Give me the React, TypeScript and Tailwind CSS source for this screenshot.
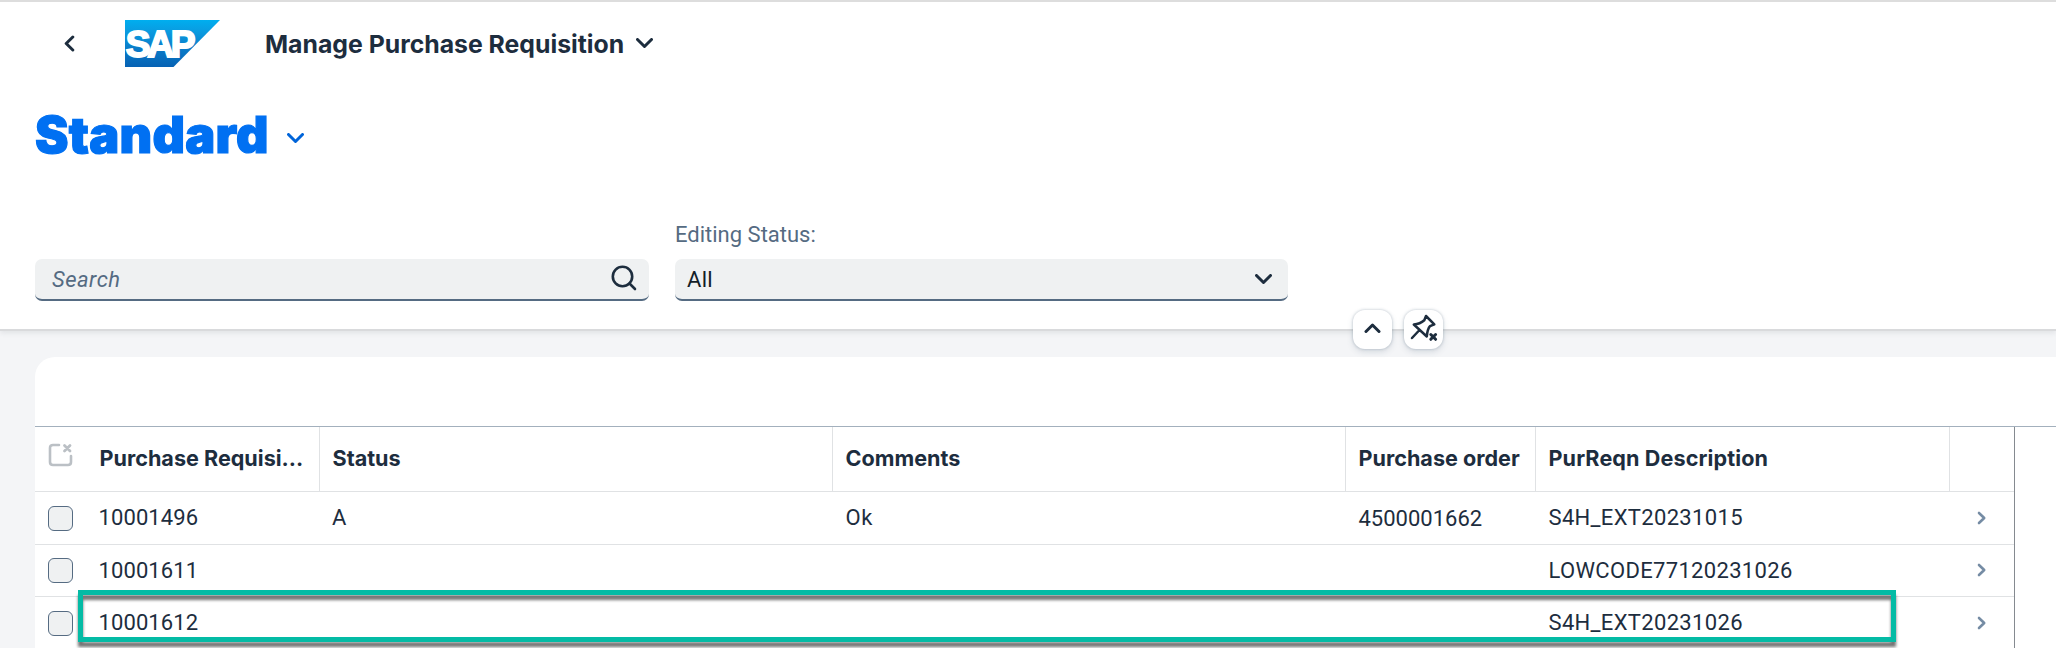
const requisitions = [
  { id: "10001496", status: "A", comments: "Ok", order: "4500001662", description: "S4H_EXT20231015" },
  { id: "10001611", status: "", comments: "", order: "", description: "LOWCODE77120231026" },
  { id: "10001612", status: "", comments: "", order: "", description: "S4H_EXT20231026" },
];

const columns = "grid grid-cols-[52px_233px_513px_513px_190px_414px_64px]";

function Chevron({ className, d = "M1.5 1.5 8.5 8.5 15.5 1.5" }: { className: string; d?: string }) {
  return (
    <svg className={className} width="17" height="10" viewBox="0 0 17 10" fill="none" stroke="currentColor" strokeWidth="3" strokeLinecap="round" strokeLinejoin="round">
      <path d={d} />
    </svg>
  );
}

function SapLogo() {
  return (
    <svg width="95" height="47" viewBox="0 0 95 47" className="ml-[50px] shrink-0">
      <defs>
        <linearGradient id="sap" x1="0" y1="0" x2="0" y2="1">
          <stop offset="0" stopColor="#00aeef" />
          <stop offset="0.25" stopColor="#0a9be0" />
          <stop offset="0.6" stopColor="#0a7cc9" />
          <stop offset="1" stopColor="#0662b4" />
        </linearGradient>
      </defs>
      <path d="M0 0H95L48.5 47H0Z" fill="url(#sap)" />
      <text x="0.8" y="36.8" fill="#fff" stroke="#fff" strokeWidth="2" fontSize="37" fontWeight="700" fontFamily="'Liberation Sans', sans-serif" letterSpacing="-3.2">
        SAP
      </text>
    </svg>
  );
}

function ShellBar() {
  return (
    <div className="flex h-[64px] items-center border-t-2 border-[#dddddd] text-[#1d2d3e]">
      <svg width="11" height="17" viewBox="0 0 11 17" fill="none" stroke="currentColor" strokeWidth="3" strokeLinecap="round" strokeLinejoin="round" className="mt-[21px] ml-[64px]">
        <path d="M8.8 2 2.2 8.5 8.8 15" />
      </svg>
      <div className="mt-[21px] flex">
        <SapLogo />
      </div>
      <h1 className="mt-[21px] ml-[45px] font-['Inter'] text-[24.8px] leading-[32px] font-bold whitespace-nowrap">Manage Purchase Requisition</h1>
      <Chevron className="mt-[20px] ml-[12px]" />
    </div>
  );
}

function Filters() {
  return (
    <div className="flex items-end pl-[35px]">
      <div className="flex h-[42px] w-[614px] items-center justify-between rounded-[7px] border-b-2 border-[#556b82] bg-[#eff1f2] pr-[12px] pl-[17px]">
        <span className="text-[22px] tracking-[0.5px] text-[#556b82] italic">Search</span>
        <svg width="26" height="26" viewBox="0 0 26 26" fill="none" stroke="#1d2d3e" strokeWidth="2.6" strokeLinecap="round" className="mb-[3px]">
          <circle cx="11.5" cy="11.5" r="9.7" />
          <path d="M18.5 18.5 24 24" />
        </svg>
      </div>
      <div className="ml-[26px] flex flex-col">
        <label className="mb-[11px] text-[22px] leading-[26px] text-[#556b82]">Editing Status:</label>
        <div className="flex h-[42px] w-[613px] items-center justify-between rounded-[7px] border-b-2 border-[#556b82] bg-[#eff1f2] pr-[16px] pl-[12px]">
          <span className="text-[22px] tracking-[0.3px] text-[#131e29]">All</span>
          <Chevron className="text-[#1d2d3e]" />
        </div>
      </div>
    </div>
  );
}

function HeaderActions() {
  const button = "flex size-[39px] items-center justify-center rounded-[12px] bg-white shadow-[0_0_2px_1px_rgba(85,107,130,0.18),0_3px_6px_rgba(85,107,130,0.18)]";
  return (
    <div className="absolute top-[310px] left-[1353px] flex gap-[12px] text-[#1d2d3e]">
      <div className={button}>
        <Chevron className="mb-[3px]" d="M2 8.5 8.5 2 15 8.5" />
      </div>
      <div className={button}>
        <svg width="28" height="28" viewBox="0 0 28 28" fill="none" stroke="currentColor" strokeWidth="2.5" strokeLinecap="round" strokeLinejoin="round" className="mb-[3px]">
          <path d="M16 2 24.3 10.3 20 12.2Q17.5 15 16.8 22.5L3.8 10.5Q10 10 14.3 6.2ZM9.5 16 2 24" />
          <path d="M20.8 20.5 25.6 25.3M25.6 20.5 20.8 25.3" strokeWidth="3" />
        </svg>
      </div>
    </div>
  );
}

function Table() {
  const head = "border-r border-[#e0e2e4] pt-[17px] pl-[12.5px] font-['Inter'] text-[21.6px] leading-[28px] font-bold whitespace-nowrap";
  return (
    <div className="h-[222px] border-t border-[#a3b0bd] text-[#1d2d3e]">
      <div className="h-full w-[1980px] border-r border-[#858a90]">
        <div className={`${columns} h-[65px] border-b border-[#e0e2e4]`}>
          <div className="pt-[16px] pl-[13px]">
            <svg width="25" height="24" viewBox="0 0 25 24" fill="none" stroke="#bbc0c5" strokeWidth="2.6" strokeLinecap="round" strokeLinejoin="round">
              <path d="M11 2H5Q2 2 2 5V19Q2 22 5 22H20Q23 22 23 19V13" />
              <path d="M16.5 2.5 22 8M22 2.5 16.5 8" strokeWidth="2.8" />
            </svg>
          </div>
          <div className={head}>Purchase Requisi...</div>
          <div className={head}>Status</div>
          <div className={head}>Comments</div>
          <div className={head}>Purchase order</div>
          <div className={`${head} tracking-[0.1px]`}>PurReqn Description</div>
        </div>
        {requisitions.map((row, i) => (
          <div key={row.id} className={`${columns} ${i === 0 ? "h-[53px]" : "h-[52px]"} items-center border-b border-[#e0e2e4] text-[22px] leading-[26px] last:border-b-0`}>
            <div className="ml-[13px] size-[25px] rounded-[6px] border border-[#556b82] bg-[#eff1f2]" />
            <span className="pl-[11.5px] tracking-[0.1px]">{row.id}</span>
            <span className="pl-[12px]">{row.status}</span>
            <span className="pl-[12.5px] tracking-[0.5px]">{row.comments}</span>
            <span className="pt-[2px] pl-[12.5px]">{row.order}</span>
            <span className="pl-[12.5px] tracking-[0.33px]">{row.description}</span>
            <svg width="10" height="14" viewBox="0 0 10 14" fill="none" stroke="#758ca4" strokeWidth="2.6" strokeLinecap="round" strokeLinejoin="round" className="mb-px ml-[27px]">
              <path d="M2 2 7.2 7 2 12" />
            </svg>
          </div>
        ))}
      </div>
    </div>
  );
}

export default function App() {
  return (
    <div className="relative flex h-[648px] w-[2056px] flex-col overflow-hidden bg-[#f4f5f7] font-['Roboto',sans-serif]">
      <header className="flex h-[331px] shrink-0 flex-col border-b-2 border-[#d9dadc] bg-white shadow-[0_2px_5px_rgba(60,70,80,0.1)]">
        <ShellBar />
        <div className="mt-[36px] flex h-[70px] items-center pl-[35px] text-[#0070f2]">
          <h2 className="font-['Inter'] text-[50.3px] leading-[60px] font-black tracking-[0.25px] [-webkit-text-stroke:1.2px_#0070f2]">Standard</h2>
          <Chevron className="mt-[5px] ml-[18px] text-[#0064d9]" />
        </div>
        <div className="mt-[52px]">
          <Filters />
        </div>
      </header>
      <main className="mt-[26px] ml-[35px] h-[291px] shrink-0 rounded-tl-[20px] bg-white pt-[69px]">
        <Table />
      </main>
      <HeaderActions />
      <div className="absolute top-[590px] left-[78px] h-[52px] w-[1818px] border-[5px] border-[#04bba5] drop-shadow-[0_5px_1.5px_rgba(0,0,0,0.55)]" />
    </div>
  );
}
